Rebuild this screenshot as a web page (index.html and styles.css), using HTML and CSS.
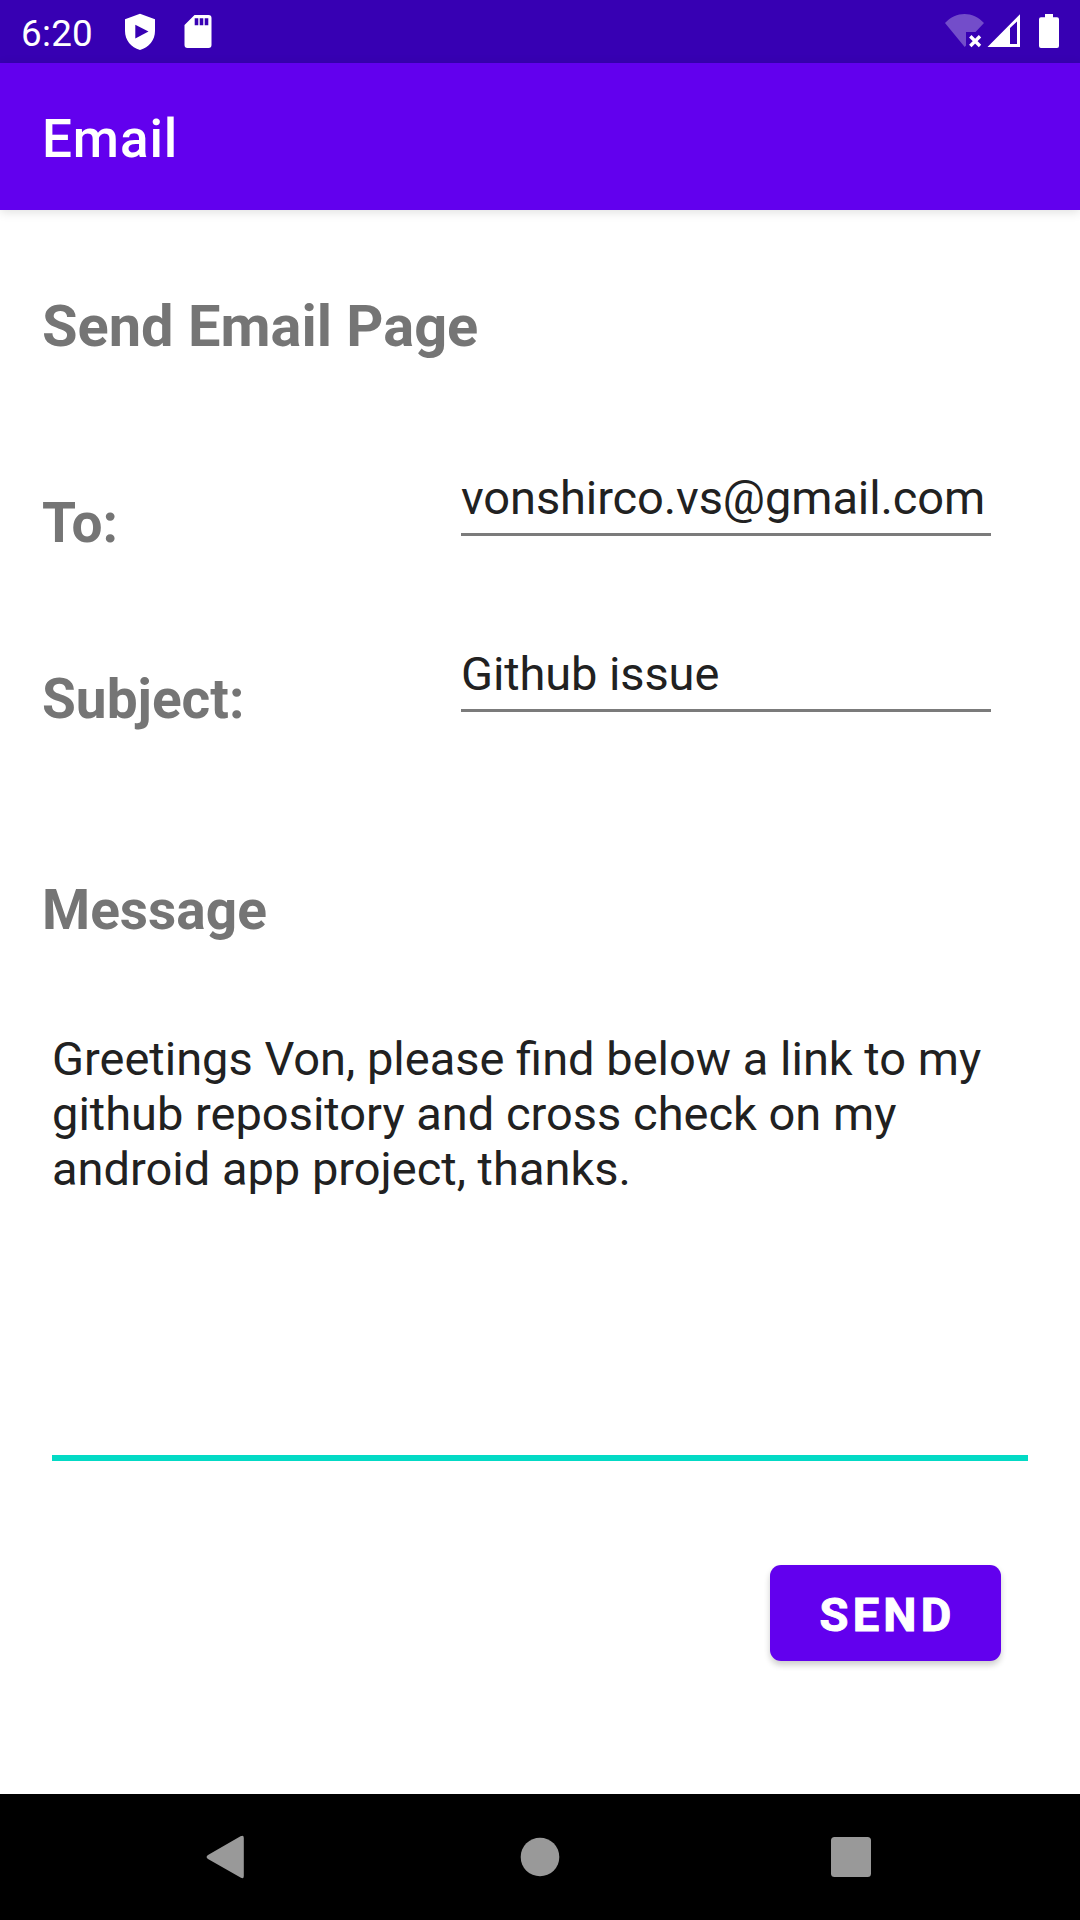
FILE: index.html
```html
<!DOCTYPE html>
<html lang="en">
<head>
<meta charset="utf-8">
<title>Email</title>
<link rel="stylesheet" href="styles.css">
</head>
<body>
<div class="screen">
  <div class="status-bar">
    <span class="clock">6:20</span>
    <svg class="status-notifications" width="100" height="63" viewBox="120 0 100 63">
      <path fill="#fff" fill-rule="evenodd" d="M140 13.7 L155 19.3 V31 C155 40 149 47.5 140 50 C131 47.5 125 40 125 31 V19.3 Z M135.300 24.700 V38.500 L148.500 31.600 Z"/>
      <path fill="#fff" fill-rule="evenodd" d="M194.5 15 H208.500 Q211.500 15 211.500 18 V45 Q211.500 48 208.500 48 H187.500 Q184.500 48 184.500 45 V25 Z M194.700 18.300 V25.300 H198.300 V18.300 Z M199.700 18.300 V25.300 H203.300 V18.300 Z M204.700 18.300 V25.300 H208.300 V18.300 Z"/>
    </svg>
    <svg class="status-system" width="120" height="63" viewBox="940 0 120 63">
      <path fill="#fff" fill-opacity=".3" d="M945 23 C956 11 973 11 984 23 L975.500 32 H966 V45.500 L964.700 47 Z"/>
      <path stroke="#fff" stroke-width="3.400" d="M970.300 36.300 L980 46 M980 36.300 L970.300 46"/>
      <path fill="#fff" fill-rule="evenodd" d="M1020 14.300 V47 H987.500 Z M1010 28 V44 H1017 V21.500 Z"/>
      <path fill="#fff" d="M1045 14 H1053 V17.300 H1057 Q1059 17.300 1059 19.300 V46 Q1059 48 1057 48 H1041 Q1039 48 1039 46 V19.300 Q1039 17.300 1041 17.300 H1045 Z"/>
    </svg>
  </div>
  <header class="app-bar"><h1 class="app-title">Email</h1></header>
  <main class="content">
    <h2 class="page-heading">Send Email Page</h2>
    <div class="field-row">
      <span class="label">To:</span>
      <div class="text-field">vonshirco.vs@gmail.com</div>
    </div>
    <div class="field-row">
      <span class="label">Subject:</span>
      <div class="text-field">Github issue</div>
    </div>
    <h3 class="label message-label">Message</h3>
    <div class="message-field">Greetings Von, please find below a link to my<br>github repository and cross check on my<br>android app project, thanks.</div>
    <button class="send-button" type="button">SEND</button>
  </main>
  <nav class="nav-bar">
    <svg width="1080" height="126" viewBox="0 1794 1080 126" fill="#999">
      <path d="M240.500 1836.300 Q243.800 1834.500 243.800 1838 V1876 Q243.800 1879.500 240.500 1877.400 L208 1859 Q205.200 1857 208 1855 Z"/>
      <circle cx="540" cy="1857" r="19.300"/>
      <rect x="831" y="1837" width="40" height="40" rx="3.500"/>
    </svg>
  </nav>
</div>
</body>
</html>
```
FILE: styles.css
```css
* {
  box-sizing: border-box;
}

body {
  margin: 0;
  font-family: Roboto, sans-serif;
}

.screen {
  width: 1080px;
  height: 1920px;
  display: flex;
  flex-direction: column;
  background: #fff;
  color: #212121;
}

.status-bar {
  height: 63px;
  padding: 0 20px 0 21px;
  display: flex;
  align-items: center;
  background: #3700b3;
  color: #fff;
}

.clock {
  width: 99px;
  font-size: 36.75px;
  line-height: 43px;
  padding-top: 3px;
  letter-spacing: .3px;
}

.status-system {
  margin-left: auto;
}

.app-bar {
  height: 147px;
  padding: 0 42px;
  display: flex;
  align-items: center;
  background: #6200ee;
  color: #fff;
  box-shadow: 0 2px 10px rgba(0, 0, 0, .13);
}

.app-title {
  margin: 0;
  padding-top: 5px;
  font-size: 53px;
  font-weight: 500;
  line-height: 62px;
  letter-spacing: .9px;
}

.content {
  flex: 1;
  display: flex;
  flex-direction: column;
  padding: 82px 52px 0 42px;
}

.page-heading {
  margin: 0 0 110px;
  font-size: 57.75px;
  line-height: 68px;
  color: #757575;
}

.field-row {
  height: 176px;
  display: grid;
  grid-template-columns: 419px 530px;
  align-items: start;
}

.label {
  margin: 0;
  font-size: 55px;
  font-weight: 700;
  line-height: 65px;
  color: #757575;
}

.field-row .label {
  padding-top: 21px;
}

.text-field {
  height: 66px;
  border-bottom: 3px solid #7b7b7b;
  font-size: 47px;
  line-height: 55px;
  letter-spacing: -.1px;
  white-space: nowrap;
}

.message-label {
  margin: 56px 0 88px;
}

.message-field {
  height: 430px;
  margin-left: 10px;
  border-bottom: 6px solid #03dac5;
  font-size: 47px;
  line-height: 55px;
  white-space: nowrap;
}

.send-button {
  align-self: flex-end;
  width: 231px;
  height: 96px;
  margin: 104px 27px 0 0;
  padding: 3px 0 0 4px;
  border: 0;
  border-radius: 11px;
  background: #6200ee;
  color: #fff;
  box-shadow: 0 4px 6px rgba(0, 0, 0, .2);
  font-family: inherit;
  font-size: 47px;
  font-weight: 700;
  letter-spacing: .0893em;
  -webkit-text-stroke: 1px #fff;
}

.nav-bar {
  height: 126px;
  background: #000;
}

.nav-bar svg {
  display: block;
}
```
